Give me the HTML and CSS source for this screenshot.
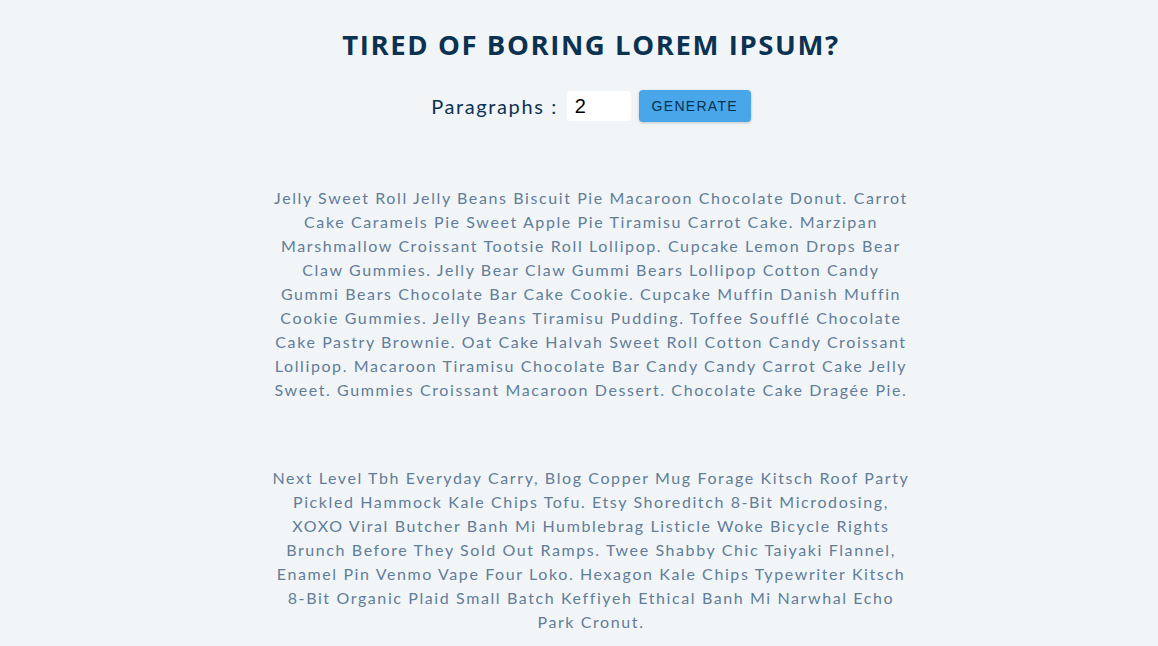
FILE: index.html
```html
<!DOCTYPE html>
<html lang="en">
<head>
<meta charset="utf-8">
<title>Lorem Ipsum Generator</title>
<link rel="stylesheet" href="styles.css">
</head>
<body>
<section class="section-center">
  <h3 class="title">tired of boring lorem ipsum?</h3>
  <form class="lorem-form">
    <label for="amount" class="label">paragraphs :</label>
    <input type="number" id="amount" class="amount" value="2">
    <button type="button" class="btn">generate</button>
  </form>
  <article class="lorem-text">
    <p>Jelly Sweet Roll Jelly Beans Biscuit Pie Macaroon Chocolate Donut. Carrot Cake Caramels Pie Sweet Apple Pie Tiramisu Carrot Cake. Marzipan Marshmallow Croissant Tootsie Roll Lollipop. Cupcake Lemon Drops Bear Claw Gummies. Jelly Bear Claw Gummi Bears Lollipop Cotton Candy Gummi Bears Chocolate Bar Cake Cookie. Cupcake Muffin Danish Muffin Cookie Gummies. Jelly Beans Tiramisu Pudding. Toffee Soufflé Chocolate Cake Pastry Brownie. Oat Cake Halvah Sweet Roll Cotton Candy Croissant Lollipop. Macaroon Tiramisu Chocolate Bar Candy Candy Carrot Cake Jelly Sweet. Gummies Croissant Macaroon Dessert. Chocolate Cake Dragée Pie.</p>
    <p>Next Level Tbh Everyday Carry, Blog Copper Mug Forage Kitsch Roof Party Pickled Hammock Kale Chips Tofu. Etsy Shoreditch 8-Bit Microdosing, XOXO Viral Butcher Banh Mi Humblebrag Listicle Woke Bicycle Rights Brunch Before They Sold Out Ramps. Twee Shabby Chic Taiyaki Flannel, Enamel Pin Venmo Vape Four Loko. Hexagon Kale Chips Typewriter Kitsch 8-Bit Organic Plaid Small Batch Keffiyeh Ethical Banh Mi Narwhal Echo Park Cronut.</p>
  </article>
</section>
</body>
</html>
```

FILE: styles.css
```css
* {
  margin: 0;
  padding: 0;
  box-sizing: border-box;
}

html, body {
  height: 100%;
}

body {
  background: #f1f5f8;
  color: #0b3251;
  font-family: "Lato", "Noto Sans", sans-serif;
  overflow: hidden;
}

.section-center {
  width: 662px;
  margin: 0 auto;
  padding: 28px 0 0 24px;
  text-align: center;
}

.title {
  font-family: "Open Sans", sans-serif;
  font-size: 27.5px;
  font-weight: 700;
  letter-spacing: 1.6px;
  text-transform: uppercase;
  line-height: 34px;
  color: #0b3251;
}

.lorem-form {
  display: flex;
  justify-content: center;
  align-items: center;
  margin-top: 28px;
}

.label {
  font-size: 20px;
  letter-spacing: 1.6px;
  text-transform: capitalize;
  color: #0b3251;
  margin-right: 9px;
}

.amount {
  width: 64px;
  height: 30px;
  border: none;
  border-radius: 4px;
  background: #fff;
  padding: 0 8px;
  font-family: "Liberation Sans", Arial, sans-serif;
  font-size: 20px;
  color: #000;
  outline: none;
}

.btn {
  margin-left: 8px;
  width: 112px;
  height: 32px;
  border: none;
  border-radius: 4px;
  background: #49a6e9;
  color: #063251;
  font-family: "Liberation Sans", Arial, sans-serif;
  font-size: 14px;
  letter-spacing: 1.3px;
  text-transform: uppercase;
  box-shadow: 0 1px 3px rgba(0, 0, 0, 0.2);
  cursor: pointer;
}

.lorem-text {
  display: flex;
  flex-direction: column;
  gap: 64px;
  margin-top: 64px;
}

.lorem-text p {
  font-size: 16px;
  line-height: 24px;
  letter-spacing: 1.6px;
  color: #617d98;
}
```
